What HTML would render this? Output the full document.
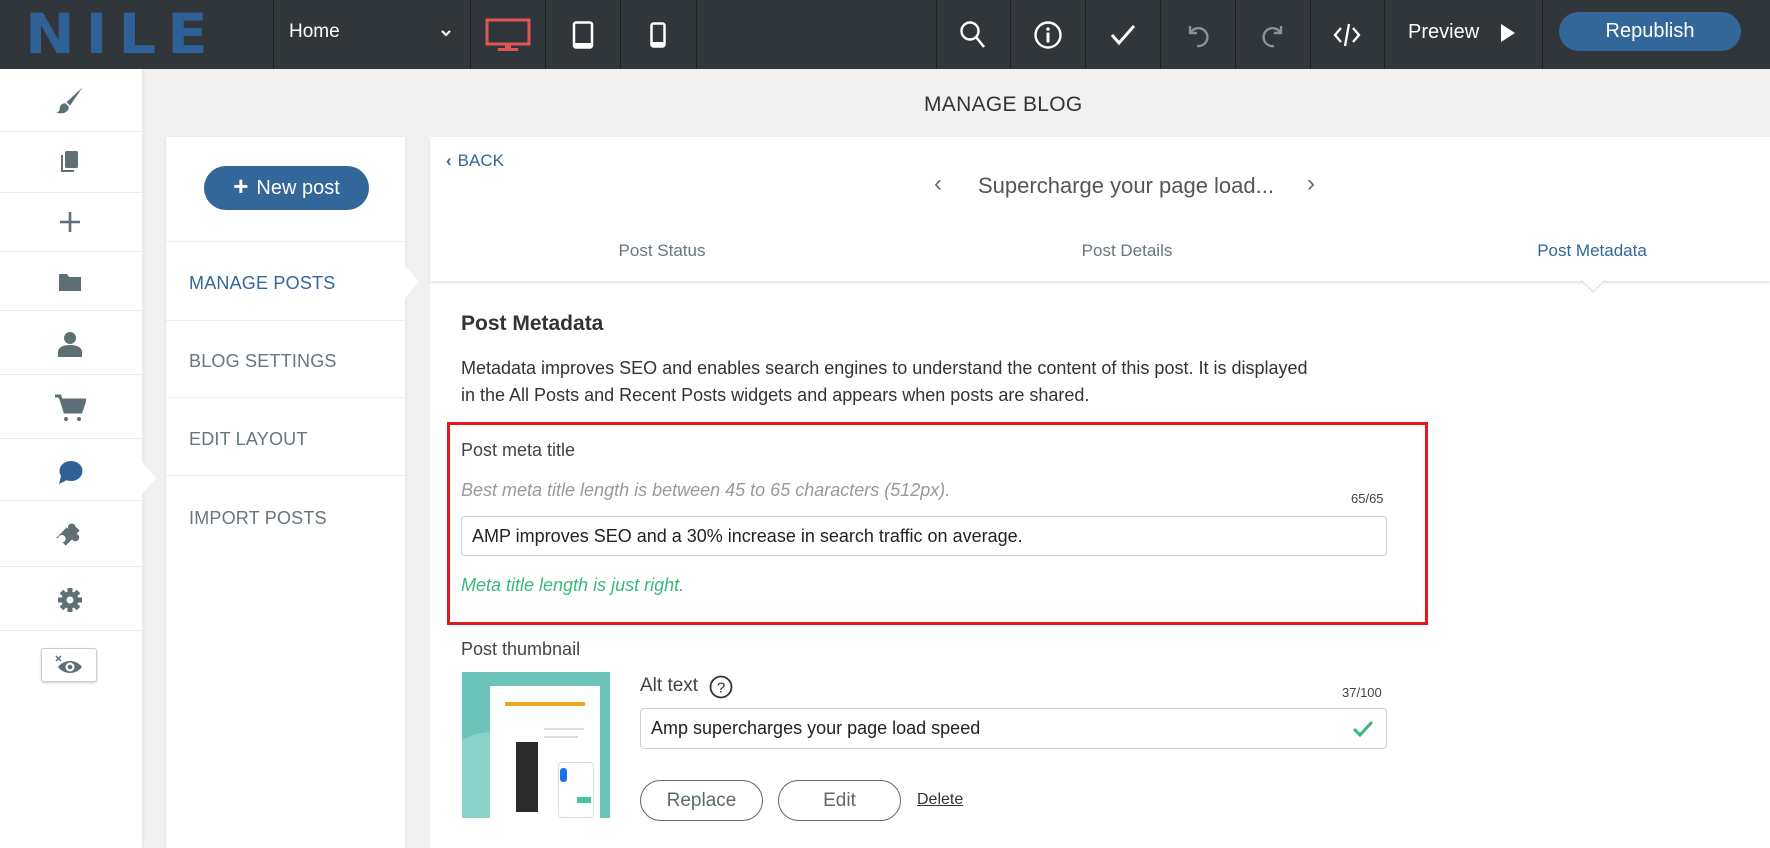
<!DOCTYPE html>
<html><head><meta charset="utf-8"><style>
*{box-sizing:border-box;margin:0;padding:0}
html,body{overflow:hidden}
body{width:1770px;height:848px;overflow:hidden;background:#f1f1f1;font-family:"Liberation Sans",sans-serif;position:relative;color:#333}
.abs{position:absolute}
#top{left:0;top:0;width:1770px;height:69px;background:#30363a}
.sep{position:absolute;top:0;width:1px;height:69px;background:#1c2023}
.ic{position:absolute;top:0;height:69px;display:flex;align-items:center;justify-content:center}
#side{left:0;top:69px;width:142px;height:779px;background:#fff;box-shadow:1px 0 3px rgba(0,0,0,.08)}
.sl{position:absolute;left:0;width:142px;height:1px;background:#ececec}
.menu{position:absolute;left:189px;font-size:18px;color:#68767c;letter-spacing:.2px}
.ml{position:absolute;left:166px;width:239px;height:1px;background:#eee}
.tab{position:absolute;top:241px;font-size:17px;color:#68767c;transform:translateX(-50%)}
.btn{position:absolute;border:1.5px solid #5c6a70;border-radius:21px;font-size:19px;color:#5c6a70;display:flex;align-items:center;justify-content:center}
.inp{position:absolute;border:1px solid #ccd3d6;border-radius:4px;background:#fff;font-size:18px;color:#222;display:flex;align-items:center;padding-left:10px}
</style></head><body>
<div id="top" class="abs">
 <div class="abs" style="left:25px;top:4px;font-size:55px;font-weight:900;color:#2f6197;letter-spacing:10px;font-family:'DejaVu Sans','Liberation Sans',sans-serif;line-height:60px;transform:scaleX(1.08);transform-origin:left">NILE</div>
 <div class="sep" style="left:273px"></div>
 <div class="abs" style="left:289px;top:21px;font-size:19px;color:#fff">Home</div>
 <svg class="abs" style="left:440px;top:28px" width="12" height="10" viewBox="0 0 12 10"><path d="M2 3l4 4 4-4" stroke="#fff" stroke-width="2.2" fill="none"/></svg>
 <div class="sep" style="left:470px"></div>
 <div class="ic" style="left:470px;width:75px"><svg width="46" height="34" viewBox="0 0 46 34"><rect x="2" y="2" width="42" height="24" fill="none" stroke="#e05554" stroke-width="3"/><rect x="20" y="26" width="6" height="4" fill="#e05554"/><rect x="13" y="30" width="20" height="3" fill="#e05554"/></svg></div>
 <div class="sep" style="left:545px"></div>
 <div class="ic" style="left:545px;width:75px"><svg width="22" height="28" viewBox="0 0 22 28"><rect x="2" y="1.5" width="18" height="25" rx="2" fill="none" stroke="#fff" stroke-width="2.5"/><rect x="2" y="22" width="18" height="4" fill="#fff"/></svg></div>
 <div class="sep" style="left:620px"></div>
 <div class="ic" style="left:620px;width:76px"><svg width="16" height="26" viewBox="0 0 16 26"><rect x="1.5" y="1.5" width="13" height="23" rx="2" fill="none" stroke="#fff" stroke-width="2.5"/><rect x="1.5" y="20" width="13" height="4" fill="#fff"/></svg></div>
 <div class="sep" style="left:696px"></div>
 <div class="sep" style="left:936px"></div>
 <div class="ic" style="left:936px;width:74px"><svg width="28" height="30" viewBox="0 0 28 30"><circle cx="11" cy="11" r="8.5" fill="none" stroke="#fff" stroke-width="2.4"/><path d="M17 17l8 10" stroke="#fff" stroke-width="2.6"/></svg></div>
 <div class="sep" style="left:1010px"></div>
 <div class="ic" style="left:1010px;width:75px"><svg width="30" height="30" viewBox="0 0 30 30"><circle cx="15" cy="15" r="12.5" fill="none" stroke="#fff" stroke-width="2.4"/><circle cx="15" cy="9" r="1.8" fill="#fff"/><rect x="13.5" y="12.5" width="3" height="10" fill="#fff"/></svg></div>
 <div class="sep" style="left:1085px"></div>
 <div class="ic" style="left:1085px;width:75px"><svg width="26" height="22" viewBox="0 0 26 22"><path d="M2 11l7 8L24 2" stroke="#fff" stroke-width="3" fill="none"/></svg></div>
 <div class="sep" style="left:1160px"></div>
 <div class="ic" style="left:1160px;width:75px"><svg width="28" height="26" viewBox="0 0 28 26"><path d="M6 4v7h7" stroke="#8a9296" stroke-width="2.4" fill="none"/><path d="M7 10a9 9 0 1 1 6 14" stroke="#8a9296" stroke-width="2.4" fill="none"/></svg></div>
 <div class="sep" style="left:1235px"></div>
 <div class="ic" style="left:1235px;width:75px"><svg width="28" height="26" viewBox="0 0 28 26"><path d="M22 4v7h-7" stroke="#8a9296" stroke-width="2.4" fill="none"/><path d="M21 10a9 9 0 1 0 -6 14" stroke="#8a9296" stroke-width="2.4" fill="none"/></svg></div>
 <div class="sep" style="left:1310px"></div>
 <div class="ic" style="left:1310px;width:74px"><svg width="28" height="28" viewBox="0 0 28 28"><path d="M8 7l-6 7 6 7M20 7l6 7-6 7M16 3l-4 22" stroke="#fff" stroke-width="2.3" fill="none"/></svg></div>
 <div class="sep" style="left:1384px"></div>
 <div class="abs" style="left:1408px;top:21px;font-size:20px;color:#fff">Preview</div>
 <svg class="abs" style="left:1500px;top:23px" width="16" height="20" viewBox="0 0 16 20"><path d="M1 1l14 9-14 9z" fill="#fff"/></svg>
 <div class="sep" style="left:1542px"></div>
 <div class="abs" style="left:1559px;top:12px;width:182px;height:39px;background:#336699;border-radius:20px;color:#fff;font-size:20px;display:flex;align-items:center;justify-content:center">Republish</div>
</div>

<div id="side" class="abs">
 <div class="sl" style="top:62px"></div><div class="sl" style="top:123px"></div><div class="sl" style="top:182px"></div><div class="sl" style="top:241px"></div><div class="sl" style="top:305px"></div><div class="sl" style="top:369px"></div><div class="sl" style="top:431px"></div><div class="sl" style="top:497px"></div><div class="sl" style="top:561px"></div>
</div>
<svg class="abs" style="left:55px;top:86px" width="30" height="30" viewBox="0 0 26 26"><path d="M24 1L13 17l-3-3z" fill="#5f6f76"/><path d="M9 15c-3 0-5 2-5 5 0 1-1 3-3 3 5 2 11 0 11-5z" fill="#5f6f76"/></svg>
<svg class="abs" style="left:59px;top:150px" width="22" height="24" viewBox="0 0 22 24"><rect x="6" y="1" width="13" height="17" rx="1.5" fill="#5f6f76"/><path d="M3 5v16h12" stroke="#5f6f76" stroke-width="2" fill="none"/></svg>
<svg class="abs" style="left:58px;top:210px" width="24" height="24" viewBox="0 0 24 24"><path d="M12 2v20M2 12h20" stroke="#5f6f76" stroke-width="2.6"/></svg>
<svg class="abs" style="left:58px;top:272px" width="24" height="20" viewBox="0 0 24 20"><path d="M1 2h8l2 3h12v14H1z" fill="#5f6f76"/></svg>
<svg class="abs" style="left:57px;top:331px" width="26" height="27" viewBox="0 0 26 27"><circle cx="13" cy="7" r="6" fill="#5f6f76"/><path d="M1 26v-5c0-4 4-7 12-7s12 3 12 7v5z" fill="#5f6f76"/></svg>
<svg class="abs" style="left:54px;top:394px" width="32" height="28" viewBox="0 0 32 28"><path d="M1 2h5l5 16h16l4-12H8" fill="#5f6f76" stroke="#5f6f76" stroke-width="3"/><circle cx="12" cy="25" r="2" fill="#5f6f76"/><circle cx="25" cy="25" r="2" fill="#5f6f76"/></svg>
<svg class="abs" style="left:57px;top:460px" width="26" height="25" viewBox="0 0 26 25"><ellipse cx="14" cy="11" rx="11.5" ry="10" fill="#2f6197"/><path d="M4 16L2 24l8-4z" fill="#2f6197"/></svg>
<svg class="abs" style="left:55px;top:522px" width="30" height="28" viewBox="0 0 28 26"><path d="M1 15l10-10 3 3a3.5 3.5 0 1 1 5-4l4 4-3 3a3.5 3.5 0 1 1-4 5l-6 6-3-3a3.5 3.5 0 1 0-4-4z" fill="#5f6f76"/></svg>
<svg class="abs" style="left:57px;top:587px" width="26" height="26" viewBox="0 0 26 26"><circle cx="13" cy="13" r="8.5" fill="#5f6f76"/><g stroke="#5f6f76" stroke-width="5"><path d="M13 1v24M1 13h24M4.5 4.5l17 17M21.5 4.5l-17 17"/></g><circle cx="13" cy="13" r="3.5" fill="#fff"/></svg>
<div class="abs" style="left:41px;top:648px;width:56px;height:34px;border:1px solid #ccc;border-radius:3px;background:#fff;box-shadow:0 1px 2px rgba(0,0,0,.2)"></div>
<svg class="abs" style="left:54px;top:654px" width="30" height="22" viewBox="0 0 30 22"><path d="M2 2l5 5M7 2l-5 5" stroke="#5f6f76" stroke-width="1.5"/><path d="M4 13c6-8 18-8 24 0-6 8-18 8-24 0z" fill="#5f6f76"/><circle cx="16" cy="13" r="4.5" fill="#fff"/><circle cx="16" cy="13" r="2.3" fill="#5f6f76"/></svg>
<svg class="abs" style="left:142px;top:462px" width="16" height="32" viewBox="0 0 16 32"><path d="M0 0l14 16L0 32z" fill="#fff"/></svg>

<div class="abs" style="left:924px;top:93px;font-size:21px;color:#333;letter-spacing:.3px">MANAGE BLOG</div>

<div class="abs" style="left:166px;top:137px;width:239px;height:711px;background:#fff;box-shadow:0 1px 3px rgba(0,0,0,.12)"></div>
<div class="abs" style="left:204px;top:166px;width:165px;height:44px;background:#336699;border-radius:22px;color:#fff;font-size:20px;display:flex;align-items:center;justify-content:center"><span style="font-size:26px;font-weight:bold;margin-right:8px;margin-top:-3px">+</span>New post</div>
<div class="ml" style="top:241px"></div><div class="ml" style="top:320px"></div><div class="ml" style="top:397px"></div><div class="ml" style="top:475px"></div>
<div class="menu" style="top:273px;color:#336699">MANAGE POSTS</div>
<div class="menu" style="top:351px">BLOG SETTINGS</div>
<div class="menu" style="top:429px">EDIT LAYOUT</div>
<div class="menu" style="top:508px">IMPORT POSTS</div>
<svg class="abs" style="left:405px;top:266px" width="16" height="32" viewBox="0 0 16 32"><path d="M0 0l14 16L0 32z" fill="#fff"/></svg>

<div class="abs" style="left:430px;top:137px;width:1340px;height:711px;background:#fff"></div>
<div class="abs" style="left:430px;top:137px;width:1340px;height:144px;background:#fff;box-shadow:0 2px 3px rgba(0,0,0,.12)"></div>
<svg class="abs" style="left:1581px;top:280px" width="24" height="13" viewBox="0 0 24 13"><path d="M0 0l12 12L24 0z" fill="#fff"/><path d="M0 0l12 12L24 0" fill="none" stroke="#ddd"/></svg>
<div class="abs" style="left:446px;top:151px;font-size:17px;color:#336699"><span style="font-weight:bold;margin-right:6px">‹</span>BACK</div>
<div class="abs" style="left:934px;top:170px;font-size:24px;color:#5f6f76">‹</div>
<div class="abs" style="left:978px;top:173px;font-size:22px;color:#555">Supercharge your page load...</div>
<div class="abs" style="left:1307px;top:170px;font-size:24px;color:#5f6f76">›</div>
<div class="tab" style="left:662px">Post Status</div>
<div class="tab" style="left:1127px">Post Details</div>
<div class="tab" style="left:1592px;color:#336699">Post Metadata</div>

<div class="abs" style="left:461px;top:312px;font-size:21px;font-weight:bold;color:#333">Post Metadata</div>
<div class="abs" style="left:461px;top:355px;width:925px;font-size:18px;line-height:27px;color:#333">Metadata improves SEO and enables search engines to understand the content of this post. It is displayed<br>in the All Posts and Recent Posts widgets and appears when posts are shared.</div>

<div class="abs" style="left:447px;top:422px;width:981px;height:203px;border:3px solid #e8161f"></div>
<div class="abs" style="left:461px;top:440px;font-size:18px;color:#444">Post meta title</div>
<div class="abs" style="left:461px;top:480px;font-size:18px;color:#999;font-style:italic">Best meta title length is between 45 to 65 characters (512px).</div>
<div class="abs" style="left:1351px;top:491px;font-size:13px;color:#444">65/65</div>
<div class="inp" style="left:461px;top:516px;width:926px;height:40px">AMP improves SEO and a 30% increase in search traffic on average.</div>
<div class="abs" style="left:461px;top:575px;font-size:18px;color:#3ab879;font-style:italic">Meta title length is just right.</div>

<div class="abs" style="left:461px;top:639px;font-size:18px;color:#444">Post thumbnail</div>
<div class="abs" style="left:462px;top:672px;width:148px;height:146px;background:#6cc4b8;overflow:hidden">
 <div class="abs" style="left:-30px;top:60px;width:120px;height:120px;border-radius:50%;background:#8ad3c9"></div>
 <div class="abs" style="left:28px;top:14px;width:110px;height:132px;background:#fff"></div>
 <div class="abs" style="left:43px;top:30px;width:80px;height:4px;background:#f4a623"></div>
 <div class="abs" style="left:54px;top:70px;width:22px;height:70px;background:#2b2b2b"></div>
 <div class="abs" style="left:82px;top:56px;width:40px;height:2px;background:#ddd"></div>
 <div class="abs" style="left:82px;top:64px;width:34px;height:2px;background:#ddd"></div>
 <div class="abs" style="left:96px;top:90px;width:36px;height:56px;background:#fff;border:1px solid #ddd;border-radius:4px"></div>
 <div class="abs" style="left:98px;top:96px;width:7px;height:14px;background:#1a73e8;border-radius:3px"></div>
 <div class="abs" style="left:115px;top:125px;width:14px;height:6px;background:#4bbf9a"></div>
</div>
<div class="abs" style="left:640px;top:675px;font-size:19px;color:#444">Alt text</div>
<svg class="abs" style="left:709px;top:675px" width="24" height="24" viewBox="0 0 24 24"><circle cx="12" cy="12" r="10.5" fill="none" stroke="#333" stroke-width="1.8"/><text x="12" y="17.5" font-size="15" text-anchor="middle" font-family="Liberation Sans" fill="#333">?</text></svg>
<div class="abs" style="left:1342px;top:685px;font-size:13px;color:#444">37/100</div>
<div class="inp" style="left:640px;top:708px;width:747px;height:41px">Amp supercharges your page load speed</div>
<svg class="abs" style="left:1352px;top:720px" width="22" height="18" viewBox="0 0 22 18"><path d="M2 9l6 6L20 2" stroke="#3ab879" stroke-width="3" fill="none"/></svg>
<div class="btn" style="left:640px;top:780px;width:123px;height:41px">Replace</div>
<div class="btn" style="left:778px;top:780px;width:123px;height:41px">Edit</div>
<div class="abs" style="left:917px;top:791px;font-size:16px;color:#333;text-decoration:underline">Delete</div>
</body></html>
